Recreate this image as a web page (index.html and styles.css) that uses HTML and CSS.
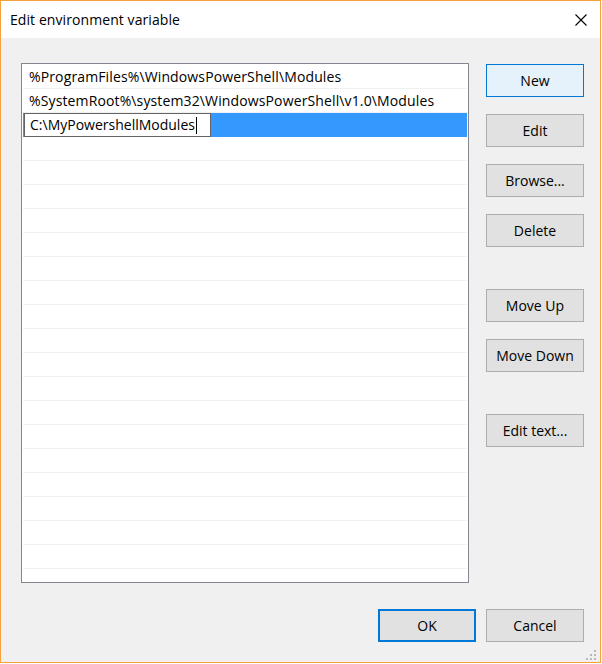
FILE: index.html
```html
<!DOCTYPE html>
<html>
<head>
<meta charset="utf-8">
<link rel="stylesheet" href="styles.css">
</head>
<body>
<div class="window">
  <div class="titlebar">
    <span class="title">Edit environment variable</span>
    <svg class="close" width="12" height="12" viewBox="0 0 12 12"><path d="M0.5 0.5 L11.5 11.5 M11.5 0.5 L0.5 11.5" stroke="#000" stroke-width="1.1" fill="none"/></svg>
  </div>
  <div class="content">
    <div class="main">
      <div class="list">
        <div class="row"><span class="text">%ProgramFiles%\WindowsPowerShell\Modules</span></div>
        <div class="row"><span class="text">%SystemRoot%\system32\WindowsPowerShell\v1.0\Modules</span></div>
        <div class="row selected"><div class="editbox">C:\MyPowershellModules<span class="caret"></span></div></div>
        <div class="row"></div><div class="row"></div><div class="row"></div><div class="row"></div>
        <div class="row"></div><div class="row"></div><div class="row"></div><div class="row"></div>
        <div class="row"></div><div class="row"></div><div class="row"></div><div class="row"></div>
        <div class="row"></div><div class="row"></div><div class="row"></div><div class="row"></div>
        <div class="row"></div><div class="row"></div><div class="row"></div>
      </div>
      <div class="buttons">
        <div class="btn default">New</div>
        <div class="btn">Edit</div>
        <div class="btn">Browse...</div>
        <div class="btn">Delete</div>
        <div class="btn gap">Move Up</div>
        <div class="btn">Move Down</div>
        <div class="btn gap">Edit text...</div>
      </div>
    </div>
    <div class="footer">
      <div class="btn focused">OK</div>
      <div class="btn">Cancel</div>
    </div>
    <svg class="grip" width="10" height="10" viewBox="0 0 10 10">
      <rect x="8" y="0" width="2" height="2" fill="#b9b9b9"/>
      <rect x="4" y="4" width="2" height="2" fill="#b9b9b9"/>
      <rect x="8" y="4" width="2" height="2" fill="#b9b9b9"/>
      <rect x="0" y="8" width="2" height="2" fill="#b9b9b9"/>
      <rect x="4" y="8" width="2" height="2" fill="#b9b9b9"/>
      <rect x="8" y="8" width="2" height="2" fill="#b9b9b9"/>
    </svg>
  </div>
</div>
</body>
</html>
```
FILE: styles.css
```css
html, body {
  margin: 0;
  padding: 0;
  background: #ffffff;
}
body {
  font-family: "Open Sans", "Noto Sans", "Liberation Sans", sans-serif;
  font-size: 14px;
  color: #000;
}
.window {
  width: 601px;
  height: 663px;
  box-sizing: border-box;
  border: 1px solid #f5a238;
  display: flex;
  flex-direction: column;
  background: #f0f0f0;
}
.titlebar {
  height: 37px;
  background: #ffffff;
  display: flex;
  align-items: center;
  justify-content: space-between;
  padding: 0 13px 0 9px;
}
.title {
  font-size: 14px;
  letter-spacing: 0.08px;
  margin-top: -1px;
}
.close {
  display: block;
  margin-top: 1px;
}
.content {
  flex: 1;
  position: relative;
  background: #f0f0f0;
}
.main {
  display: flex;
  padding: 25px 0 0 20px;
}
.list {
  width: 448px;
  height: 520px;
  box-sizing: border-box;
  border: 1px solid #828790;
  background: #ffffff;
  padding: 1px 1px 0 1px;
  overflow: hidden;
}
.row {
  height: 23px;
  border-bottom: 1px solid #f0f0f0;
  line-height: 23px;
  padding-left: 6px;
  white-space: nowrap;
  display: flex;
  align-items: flex-start;
}
.text {
  letter-spacing: 0.13px;
}
.row.selected {
  background: #3399ff;
  border-bottom-color: #3399ff;
  padding-left: 1px;
}
.editbox {
  width: 187px;
  height: 24px;
  box-sizing: border-box;
  border: 1px solid #646464;
  background: #ffffff;
  padding-left: 5px;
  line-height: 22px;
  display: flex;
  align-items: center;
}
.caret {
  display: inline-block;
  width: 1px;
  height: 17px;
  background: #000;
  margin-left: 1px;
}
.buttons {
  display: flex;
  flex-direction: column;
  gap: 17px;
  margin-left: 17px;
  margin-top: 1px;
}
.btn {
  width: 98px;
  height: 33px;
  box-sizing: border-box;
  border: 1px solid #adadad;
  background: #e1e1e1;
  display: flex;
  align-items: center;
  justify-content: center;
  font-size: 14px;
}
.btn.gap {
  margin-top: 25px;
}
.btn.default {
  border-color: #0078d7;
  background: #e5f1fb;
}
.btn.focused {
  border: 2px solid #0078d7;
}
.footer {
  display: flex;
  justify-content: flex-end;
  gap: 10px;
  padding: 26px 16px 0 0;
}
.grip {
  position: absolute;
  right: 4px;
  bottom: 2px;
}
```
